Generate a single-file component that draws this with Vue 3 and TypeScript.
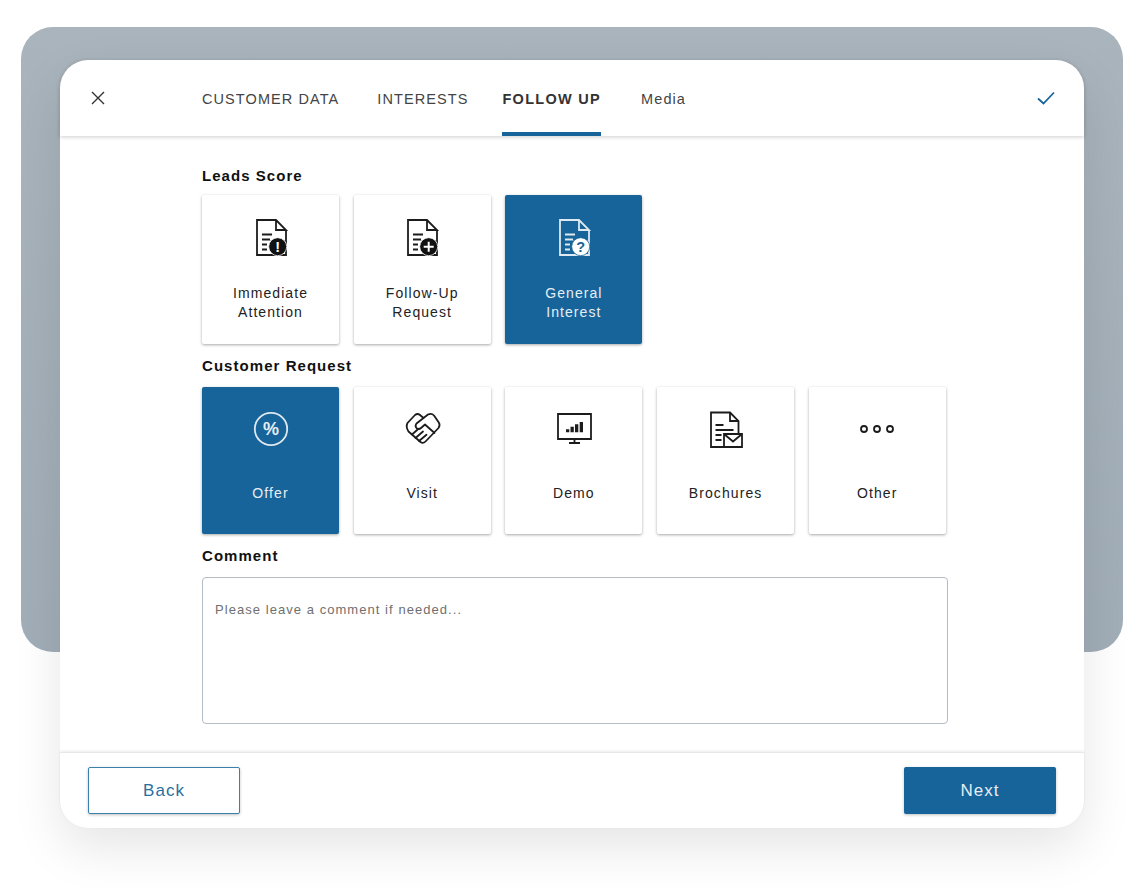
<script setup lang="ts">
interface Tile {
  label: string[]
  icon: string
  active?: boolean
}

const tabs = [
  { name: 'CUSTOMER DATA' },
  { name: 'INTERESTS' },
  { name: 'FOLLOW UP', active: true },
  { name: 'Media' },
]

const scores: Tile[] = [
  { label: ['Immediate', 'Attention'], icon: 'alert' },
  { label: ['Follow-Up', 'Request'], icon: 'plus' },
  { label: ['General', 'Interest'], icon: 'question', active: true },
]

const requests: Tile[] = [
  { label: ['Offer'], icon: 'percent', active: true },
  { label: ['Visit'], icon: 'hands' },
  { label: ['Demo'], icon: 'monitor' },
  { label: ['Brochures'], icon: 'mail' },
  { label: ['Other'], icon: 'dots' },
]

const sections = [
  { title: 'Leads Score', tiles: scores },
  { title: 'Customer Request', tiles: requests },
]

const badges: Record<string, string> = { alert: '!', question: '?' }
</script>

<template>
  <div class="page">
    <div class="backdrop"></div>
    <div class="modal">
      <!-- Header -->
      <header class="modal-header">
        <svg class="close" width="16" height="16" viewBox="0 0 16 16">
          <path d="M2 2l12 12M14 2L2 14" />
        </svg>
        <nav class="tabs">
          <span v-for="tab in tabs" :key="tab.name" class="tab" :class="{ active: tab.active }">{{ tab.name }}</span>
        </nav>
        <svg class="check" width="20" height="16" viewBox="0 0 20 16">
          <path d="M2 8.5l5.5 5L18 2.5" />
        </svg>
      </header>

      <!-- Content -->
      <main class="modal-body">
        <section v-for="section in sections" :key="section.title" class="section">
          <h3>{{ section.title }}</h3>
          <div class="tiles">
            <div v-for="tile in section.tiles" :key="tile.icon" class="tile" :class="{ active: tile.active }">
              <svg class="tile-icon" width="40" height="40" viewBox="0 0 40 40">
                <template v-if="tile.icon === 'alert' || tile.icon === 'plus' || tile.icon === 'question'">
                  <path class="line" d="M35 12V37H6V2H25L35 12H25V2" />
                  <path class="line" d="M11 16.5h10M11 21.5h8M11 26.5h5M11 31.5h5" />
                  <circle class="badge" cx="26.7" cy="28.7" r="9" />
                  <path v-if="tile.icon === 'plus'" class="badge-mark" d="M26.7 23.7v10M21.7 28.7h10" />
                  <text v-else class="badge-text" x="26.7" y="33.8" text-anchor="middle">{{ badges[tile.icon] }}</text>
                </template>
                <template v-else-if="tile.icon === 'percent'">
                  <circle class="line" cx="20" cy="19" r="16.2" />
                  <text class="percent-text" x="20" y="25.4" text-anchor="middle">%</text>
                </template>
                <template v-else-if="tile.icon === 'hands'">
                  <path class="line round" d="M21.500 8L26 4.500Q29.500 2.800 32 5.500L36.800 12.500Q38.500 15 36.500 18L23.500 31.500Q21 34 18.500 32L6.500 21.500Q3.500 17 5.500 13L13 5Q15.500 3 18 5L21.500 8L14.500 13.500Q12.500 16.500 15 18.500Q17 19.800 19 18L23 14.500L32.500 23" />
                  <path class="line round" d="M10 24.500L16.500 18.800M13.500 28L21 21.500M17 31L24.500 24.800" />
                </template>
                <template v-else-if="tile.icon === 'monitor'">
                  <path class="line" d="M4 4h33v25H4zM20.500 29v4M15 33h11" />
                  <path class="bars" d="M12 19.300h3.300v3h-3.300zM16.500 16.700h3.300v5.600h-3.300zM21 14.300h3.300v8h-3.300zM25.700 12h3.300v10.300h-3.300z" />
                </template>
                <template v-else-if="tile.icon === 'mail'">
                  <path class="line" d="M32.500 24V11L24 2.500H5V37h13" />
                  <path class="line" d="M24 2.500V11h8.500M9.500 15h8M9.500 20h18M9.500 25h6M9.500 30h6" />
                  <path class="line" d="M18 24h18v13H18zM18 24l9 7.500 9-7.500" />
                </template>
                <template v-else>
                  <circle class="line" cx="7" cy="19" r="3" />
                  <circle class="line" cx="20" cy="19" r="3" />
                  <circle class="line" cx="33" cy="19" r="3" />
                </template>
              </svg>
              <div class="tile-label">
                <span v-for="row in tile.label" :key="row">{{ row }}</span>
              </div>
            </div>
          </div>
        </section>

        <section class="section">
          <h3>Comment</h3>
          <div class="comment">Please leave a comment if needed...</div>
        </section>
      </main>

      <!-- Footer -->
      <footer class="modal-footer">
        <button class="btn btn-back">Back</button>
        <button class="btn btn-next">Next</button>
      </footer>
    </div>
  </div>
</template>

<style>
html,
body {
  margin: 0;
  background: #ffffff;
}
</style>

<style scoped>
.page {
  position: relative;
  width: 1144px;
  height: 888px;
  padding: 60px 60px 0;
  box-sizing: border-box;
  overflow: hidden;
  font-family: 'Liberation Sans', Arial, sans-serif;
}

.backdrop {
  position: absolute;
  left: 21px;
  top: 27px;
  width: 1102px;
  height: 625px;
  border-radius: 32px;
  background: linear-gradient(180deg, #a9b4bc 0%, #a1adb7 100%);
}

.modal {
  position: relative;
  width: 1024px;
  height: 768px;
  background: #ffffff;
  border-radius: 28px;
  box-shadow: 0 20px 50px rgba(0, 0, 0, 0.1);
  display: flex;
  flex-direction: column;
}

.modal-header {
  height: 76px;
  flex-shrink: 0;
  display: flex;
  align-items: center;
  padding: 0 28px 0 30px;
  border-radius: 28px 28px 0 0;
  box-shadow: 0 1px 4px rgba(0, 0, 0, 0.2);
}

.close {
  flex-shrink: 0;
  fill: none;
  stroke: #333333;
  stroke-width: 1.4;
}

.check {
  flex-shrink: 0;
  fill: none;
  stroke: #17649a;
  stroke-width: 1.8;
}

.tabs {
  display: flex;
  flex: 1;
  height: 100%;
  gap: 38px;
  margin-left: 96px;
}

.tab {
  display: flex;
  align-items: center;
  height: 76px;
  box-sizing: border-box;
  padding-top: 1px;
  font-size: 14.5px;
  letter-spacing: 1.08px;
  color: #444444;
}

.tab.active {
  font-weight: 700;
  border-bottom: 4px solid #17649a;
  padding-top: 5px;
  margin: 0 2px 0 -4px;
  letter-spacing: 1.3px;
  color: #333333;
}

.modal-body {
  flex: 1;
  padding: 31px 0 0 142px;
  display: flex;
  flex-direction: column;
}

.section h3 {
  margin: 0;
  font-size: 15px;
  line-height: 18px;
  font-weight: 700;
  letter-spacing: 1.05px;
  color: #111111;
}

.tiles {
  display: flex;
  gap: 14.7px;
  margin: 12px 0 13px;
}

.section:first-child .tiles {
  margin-top: 10px;
}

.tile {
  width: 137px;
  height: 147px;
  box-sizing: border-box;
  padding-top: 23px;
  background: #ffffff;
  color: #222222;
  box-shadow: 0 1px 3px rgba(0, 0, 0, 0.35);
  border-radius: 2px;
  text-align: center;
}

.section:first-child .tile {
  height: 149px;
}

.tile.active {
  background: #17649a;
  color: #e6eef4;
}

.tile-icon {
  display: block;
  margin: 0 auto;
}

.tile-label {
  display: flex;
  flex-direction: column;
  justify-content: center;
  height: 38px;
  margin-top: 24.5px;
  font-size: 14px;
  line-height: 19px;
  letter-spacing: 1.08px;
}

.section:first-child .tile-label {
  margin-top: 25.5px;
}

.line {
  fill: none;
  stroke: #1c1c1c;
  stroke-width: 1.8;
}

.round {
  stroke-linejoin: round;
  stroke-linecap: round;
}

.bars {
  fill: #1c1c1c;
}

.badge {
  fill: #111111;
  stroke: #ffffff;
  stroke-width: 0.8;
}

.badge-mark {
  fill: none;
  stroke: #ffffff;
  stroke-width: 2;
}

.badge-text {
  font-size: 14.5px;
  font-weight: 700;
  fill: #ffffff;
}

.percent-text {
  font-size: 18px;
  font-weight: 700;
  fill: #1c1c1c;
}

.tile.active .line {
  stroke: #dfe9f0;
}

.tile.active .badge {
  fill: #ffffff;
  stroke: #17649a;
}

.tile.active .badge-text {
  fill: #17649a;
}

.tile.active .percent-text {
  fill: #e6eef4;
}

.comment {
  width: 746px;
  height: 147px;
  box-sizing: border-box;
  margin-top: 12px;
  padding: 24px 12px;
  border: 1px solid #b4bcc4;
  border-radius: 4px;
  font-size: 13px;
  line-height: 16px;
  letter-spacing: 1.05px;
  color: #6f6f6f;
}

.modal-footer {
  height: 76px;
  box-sizing: border-box;
  flex-shrink: 0;
  display: flex;
  align-items: center;
  justify-content: space-between;
  padding: 0 28px;
  border-top: 1px solid #e8e8e8;
  box-shadow: 0 -1px 3px rgba(0, 0, 0, 0.08);
  border-radius: 0 0 28px 28px;
}

.btn {
  width: 152px;
  height: 47px;
  box-sizing: border-box;
  border-radius: 2px;
  font-family: inherit;
  font-size: 17px;
  letter-spacing: 1px;
  box-shadow: 0 1px 3px rgba(0, 0, 0, 0.25);
}

.btn-back {
  background: #ffffff;
  border: 1px solid #3a80ad;
  color: #2a6f9f;
}

.btn-next {
  background: #17649a;
  border: none;
  color: #e6eef4;
}
</style>
